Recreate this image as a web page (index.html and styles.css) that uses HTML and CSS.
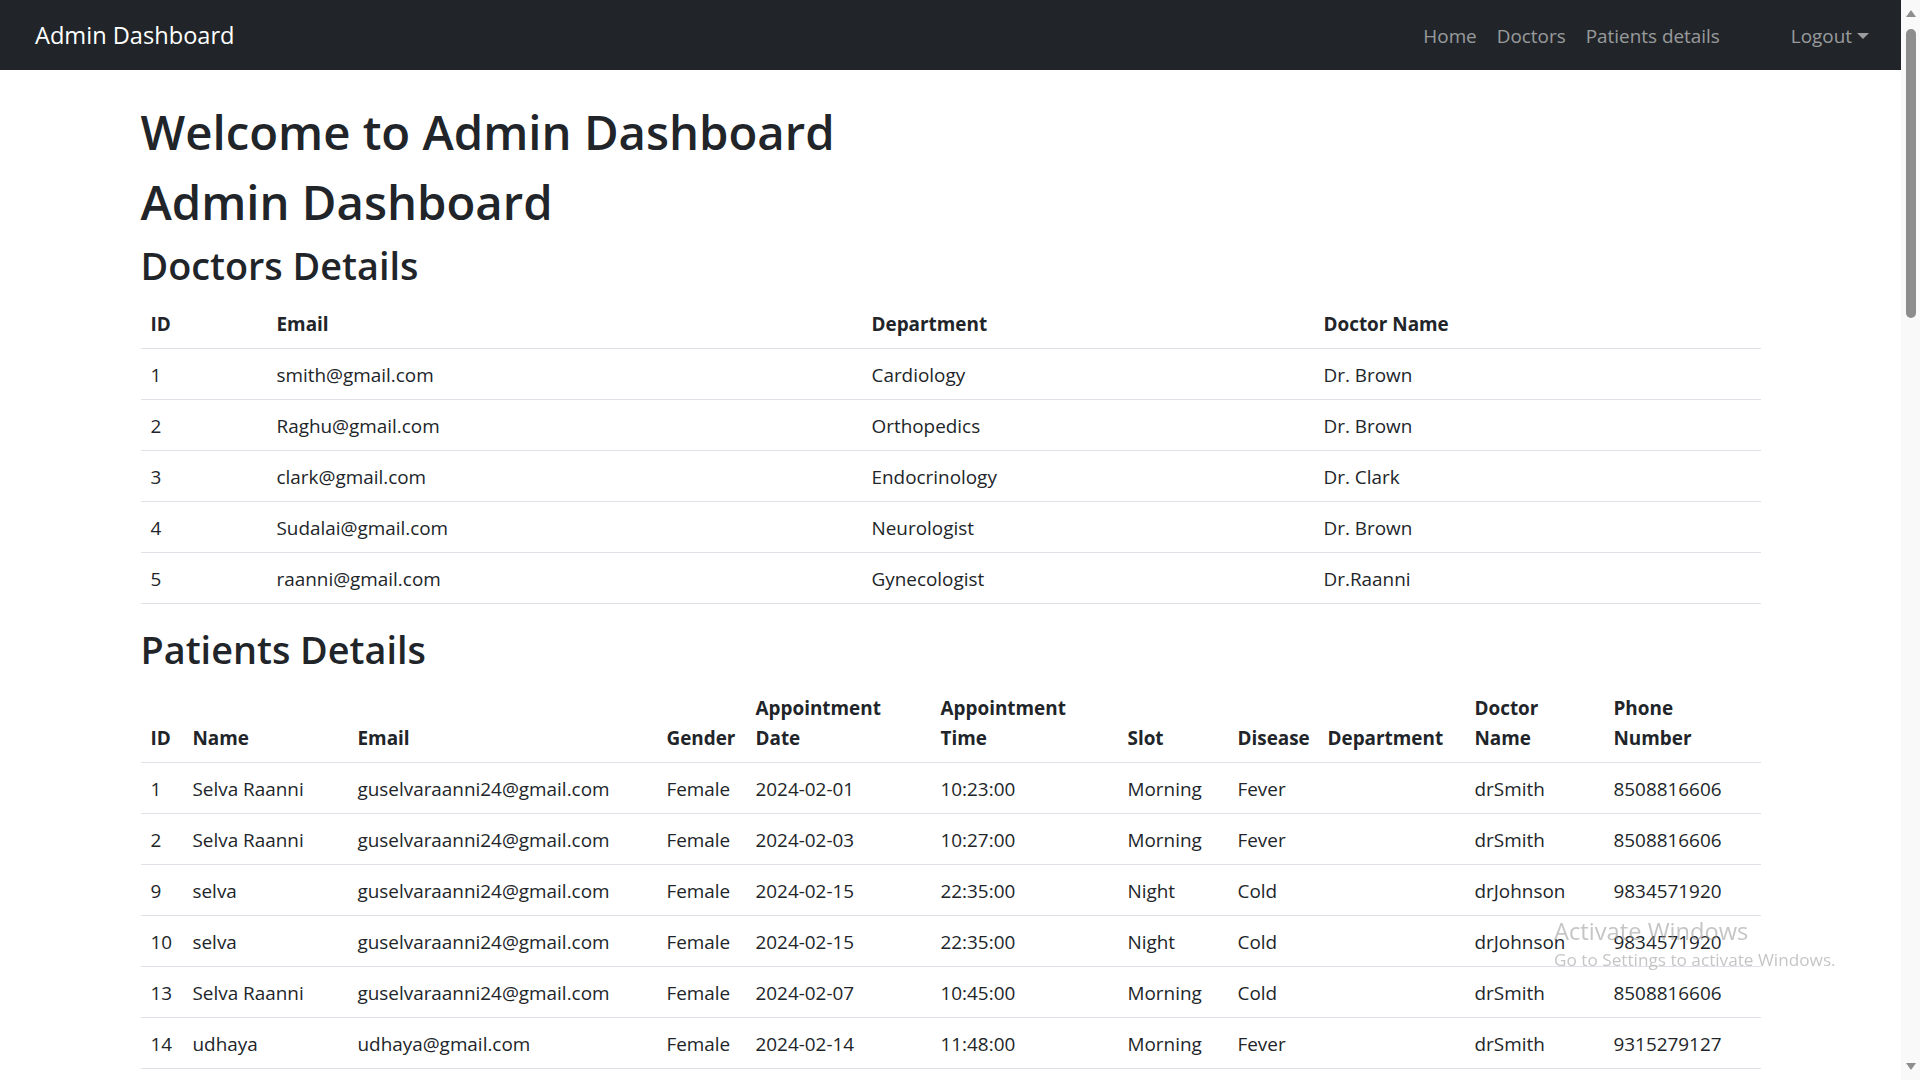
FILE: index.html
```html
<!DOCTYPE html>
<html lang="en">
<head>
<meta charset="utf-8">
<title>Admin Dashboard</title>
<link rel="stylesheet" href="styles.css">
</head>
<body>
<div class="page">
  <nav class="navbar">
    <a class="brand" href="#">Admin Dashboard</a>
    <ul class="nav">
      <li><a class="nav-link" href="#">Home</a></li>
      <li><a class="nav-link" href="#">Doctors</a></li>
      <li><a class="nav-link" href="#">Patients details</a></li>
    </ul>
    <ul class="nav nav-end">
      <li><a class="nav-link dropdown-toggle" href="#">Logout</a></li>
    </ul>
  </nav>

  <main class="container">
    <h1>Welcome to Admin Dashboard</h1>
    <h1>Admin Dashboard</h1>
    <h2>Doctors Details</h2>
    <table class="table">
      <colgroup>
        <col class="d-id"><col class="d-email"><col class="d-dept"><col class="d-name">
      </colgroup>
      <thead>
        <tr><th>ID</th><th>Email</th><th>Department</th><th>Doctor Name</th></tr>
      </thead>
      <tbody>
        <tr><td>1</td><td>smith@gmail.com</td><td>Cardiology</td><td>Dr. Brown</td></tr>
        <tr><td>2</td><td>Raghu@gmail.com</td><td>Orthopedics</td><td>Dr. Brown</td></tr>
        <tr><td>3</td><td>clark@gmail.com</td><td>Endocrinology</td><td>Dr. Clark</td></tr>
        <tr><td>4</td><td>Sudalai@gmail.com</td><td>Neurologist</td><td>Dr. Brown</td></tr>
        <tr><td>5</td><td>raanni@gmail.com</td><td>Gynecologist</td><td>Dr.Raanni</td></tr>
      </tbody>
    </table>

    <h2>Patients Details</h2>
    <table class="table">
      <colgroup>
        <col class="p-id"><col class="p-name"><col class="p-email"><col class="p-gender">
        <col class="p-date"><col class="p-time"><col class="p-slot"><col class="p-disease">
        <col class="p-dept"><col class="p-doctor"><col class="p-phone">
      </colgroup>
      <thead>
        <tr>
          <th>ID</th><th>Name</th><th>Email</th><th>Gender</th>
          <th>Appointment<br>Date</th><th>Appointment<br>Time</th>
          <th>Slot</th><th>Disease</th><th>Department</th>
          <th>Doctor<br>Name</th><th>Phone<br>Number</th>
        </tr>
      </thead>
      <tbody>
        <tr><td>1</td><td>Selva Raanni</td><td>guselvaraanni24@gmail.com</td><td>Female</td><td>2024-02-01</td><td>10:23:00</td><td>Morning</td><td>Fever</td><td></td><td>drSmith</td><td>8508816606</td></tr>
        <tr><td>2</td><td>Selva Raanni</td><td>guselvaraanni24@gmail.com</td><td>Female</td><td>2024-02-03</td><td>10:27:00</td><td>Morning</td><td>Fever</td><td></td><td>drSmith</td><td>8508816606</td></tr>
        <tr><td>9</td><td>selva</td><td>guselvaraanni24@gmail.com</td><td>Female</td><td>2024-02-15</td><td>22:35:00</td><td>Night</td><td>Cold</td><td></td><td>drJohnson</td><td>9834571920</td></tr>
        <tr><td>10</td><td>selva</td><td>guselvaraanni24@gmail.com</td><td>Female</td><td>2024-02-15</td><td>22:35:00</td><td>Night</td><td>Cold</td><td></td><td>drJohnson</td><td>9834571920</td></tr>
        <tr><td>13</td><td>Selva Raanni</td><td>guselvaraanni24@gmail.com</td><td>Female</td><td>2024-02-07</td><td>10:45:00</td><td>Morning</td><td>Cold</td><td></td><td>drSmith</td><td>8508816606</td></tr>
        <tr><td>14</td><td>udhaya</td><td>udhaya@gmail.com</td><td>Female</td><td>2024-02-14</td><td>11:48:00</td><td>Morning</td><td>Fever</td><td></td><td>drSmith</td><td>9315279127</td></tr>
      </tbody>
    </table>
  </main>
</div>

<div class="scrollbar">
  <span class="arrow arrow-up"></span>
  <span class="thumb"></span>
  <span class="track-fill"></span>
  <span class="arrow arrow-down"></span>
</div>

<div class="watermark">
  <div class="wm-title">Activate Windows</div>
  <div class="wm-sub">Go to Settings to activate Windows.</div>
</div>
</body>
</html>
```

FILE: styles.css
```css
* {
  box-sizing: border-box;
}

html, body {
  height: 100%;
  margin: 0;
  overflow: hidden;
}

body {
  display: flex;
  font-family: "Open Sans", "Noto Sans", sans-serif;
  font-size: 18.9px;
  line-height: 30px;
  color: #212529;
  background: #fff;
}

.page {
  flex: 1;
  min-width: 0;
  overflow: hidden;
}

/* Navbar */
.navbar {
  display: flex;
  align-items: center;
  height: 70px;
  padding: 0 22px 0 35px;
  background: #212529;
}

.brand {
  font-size: 23.6px;
  line-height: 37.5px;
  padding: 7px 0 5px;
  color: #fff;
  text-decoration: none;
  margin-right: auto;
}

.nav {
  display: flex;
  list-style: none;
  margin: 0;
  padding: 0;
}

.nav-end {
  margin-left: 51px;
}

.nav-link {
  display: block;
  padding: 11px 10px 9px;
  color: rgba(255, 255, 255, 0.55);
  text-decoration: none;
}

.dropdown-toggle::after {
  content: "";
  display: inline-block;
  margin-left: 5px;
  vertical-align: 4px;
  border-top: 6px solid;
  border-right: 6px solid transparent;
  border-left: 6px solid transparent;
}

/* Content */
.container {
  width: 1650px;
  margin: 30px auto 0;
  padding: 0 15px;
}

h1, h2 {
  margin: 0 0 8px;
  padding-top: 2px;
  font-weight: 600;
}

h1 {
  font-size: 47.3px;
  line-height: 60px;
}

h2 {
  font-size: 37.8px;
  line-height: 48px;
}

.table {
  width: 100%;
  table-layout: fixed;
  border-collapse: collapse;
  margin-bottom: 20px;
}

.table thead {
  vertical-align: bottom;
}

.table tbody {
  vertical-align: top;
}

.table th,
.table td {
  padding: 11px 10px 9px;
  text-align: left;
  border-bottom: 1px solid #dee2e6;
  white-space: nowrap;
}

.table th {
  font-weight: 700;
}

/* Doctors columns */
.d-id { width: 126px; }
.d-email { width: 595px; }
.d-dept { width: 452px; }
.d-name { width: 447px; }

/* Patients columns */
.p-id { width: 42px; }
.p-name { width: 165px; }
.p-email { width: 309px; }
.p-gender { width: 89px; }
.p-date { width: 185px; }
.p-time { width: 187px; }
.p-slot { width: 110px; }
.p-disease { width: 90px; }
.p-dept { width: 147px; }
.p-doctor { width: 139px; }
.p-phone { width: 157px; }

/* Fake browser scrollbar */
.scrollbar {
  width: 19px;
  flex: none;
  display: flex;
  flex-direction: column;
  align-items: center;
  background: #f9f9f9;
  padding: 10px 0 10px;
}

.arrow {
  width: 0;
  height: 0;
  border-left: 5px solid transparent;
  border-right: 5px solid transparent;
}

.arrow-up {
  border-bottom: 7px solid #8d8d8d;
}

.arrow-down {
  border-top: 7px solid #8d8d8d;
}

.thumb {
  width: 10px;
  height: 289px;
  margin-top: 12px;
  border-radius: 5px;
  background: #8d8d8d;
}

.track-fill {
  flex: 1;
}

/* Windows activation watermark */
.watermark {
  position: fixed;
  left: 1554px;
  top: 915px;
  color: rgba(150, 150, 150, 0.55);
  pointer-events: none;
}

.wm-title {
  font-size: 23.7px;
  line-height: 32px;
}

.wm-sub {
  font-size: 17.2px;
  line-height: 24px;
  margin-top: 1px;
}
```
